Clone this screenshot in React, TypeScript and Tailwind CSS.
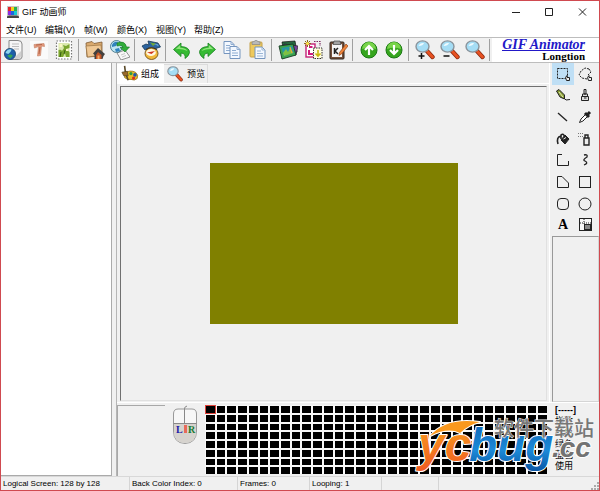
import type { ReactNode } from "react"

type Item = { label: string; icon: ReactNode }

const Svg = ({ children, className = "h-5 w-5" }: { children: ReactNode; className?: string }) => (
  <svg viewBox="0 0 20 20" className={className} fill="none" aria-hidden="true">
    {children}
  </svg>
)

const AppIcon = () => (
  <svg viewBox="0 0 12 12" className="h-3 w-3" aria-hidden="true">
    <rect width="12" height="12" fill="#c8c8c8" />
    <rect x="1" y="1" width="9" height="8" fill="#222" />
    <rect x="1" y="1" width="3" height="4" fill="#e5232b" />
    <rect x="4" y="1" width="3" height="4" fill="#f5d020" />
    <rect x="7" y="1" width="3" height="4" fill="#25b34a" />
    <rect x="1" y="5" width="3" height="4" fill="#8a2be2" />
    <rect x="4" y="5" width="3" height="4" fill="#1a66e0" />
    <rect x="7" y="5" width="3" height="4" fill="#1ac7d0" />
    <path d="M0 12V10.500L2 9.500H10L12 10.500V12Z" fill="#444" />
  </svg>
)

const Globe = ({ x, y, r }: { x: number; y: number; r: number }) => (
  <g transform={`translate(${x} ${y})`}>
    <circle r={r} fill="#1d5fa8" stroke="#123a66" strokeWidth=".7" />
    <path
      d={`M${-r * 0.8} ${-r * 0.2}Q${-r * 0.5} ${-r} ${r * 0.3} ${-r * 0.8}Q${r * 0.1} ${-r * 0.2} ${-r * 0.3} 0Z`}
      fill="#8fd6ee"
    />
    <path d={`M${-r * 0.5} ${r * 0.3}Q${r * 0.2} ${-r * 0.1} ${r * 0.5} ${r * 0.3}L${r * 0.1} ${r * 0.8}Z`} fill="#35a853" />
  </g>
)

const NewIcon = () => (
  <Svg>
    <path d="M5 .5H14Q18 .5 18 4V17Q18 19.500 14 19.500H5Z" fill="#f6f6f6" stroke="#888" />
    <path d="M8 4H15M8 6.500H15M10 9H15" stroke="#bdbdbd" />
    <path d="M12 16L17 11V16Q17 19 13 19H10Z" fill="#d0d0d0" />
    <Globe x={6} y={14} r={5.6} />
  </Svg>
)

const TextFrameIcon = () => (
  <Svg>
    <rect x="1" y="1" width="18" height="18" fill="#fafafa" />
    <path d="M5.500 8L5 4.500L15 3.500L15.500 6.500L12.500 6L11.500 15.500L8.500 16L9.500 6.500Z" fill="#e3977a" stroke="#c98a70" strokeWidth=".7" />
    <path d="M7 5L13 4.500M11 7L10 14" stroke="#a9583c" strokeWidth=".8" />
  </Svg>
)

const StampIcon = () => (
  <Svg>
    <rect x="2.500" y="1" width="15" height="18" fill="#fff" stroke="#777" strokeWidth="1.200" strokeDasharray="1.500 1.500" />
    <rect x="4.500" y="3" width="11" height="14" fill="#dbe8ae" />
    <path d="M4.500 17V10Q7 9 8 11L10 8L9 5L12 6L15.500 4V8L12 9L15.500 12V17H12L11 13L9 17Z" fill="#7ba52e" />
    <path d="M5.500 4H8V7H5.500ZM12 9H14V11H12Z" fill="#fcf7c4" />
    <path d="M7 12L6 17M11 10L10 14" stroke="#2f5512" strokeWidth=".9" />
  </Svg>
)

const FolderHomeIcon = () => (
  <Svg>
    <path d="M1 3L7 1.500L9 3.500L17 2V16L2 17Z" fill="#d9a96e" stroke="#805c35" strokeWidth=".8" />
    <path d="M1 6L16 5L17 15L2.500 17Z" fill="#efc895" stroke="#9a7242" strokeWidth=".7" />
    <path d="M8 13.500L13 8L20 14L18.500 16L17.500 19H9.500V15Z" fill="#43403e" />
    <path d="M11 15L13 12L16.500 15V19H11Z" fill="#c35526" />
    <path d="M12.500 15.500H14.500V19H12.500Z" fill="#f5ad6b" />
  </Svg>
)

const GlobePageIcon = () => (
  <Svg>
    <path d="M7 13L15 10L20 17L11 20Z" fill="#f7f7f7" stroke="#777" strokeWidth=".8" />
    <path d="M11 15L15 13.500M12 17L16 15.500" stroke="#bbb" strokeWidth=".8" />
    <circle cx="6.500" cy="6.500" r="6" fill="#bfe5f2" stroke="#2c6379" strokeWidth=".8" />
    <path d="M2 5Q4 1 8 2L6 6L2 7ZM5 9L9 8L10 11L6 12Z" fill="#2f82bd" />
    <path d="M7 3Q15 0 16.500 7H19.500L15 12L10 7.500H13Q12 4.500 7 6Z" fill="#31ad3a" stroke="#157423" strokeWidth=".6" />
  </Svg>
)

const CoverDiscIcon = () => (
  <Svg>
    <path d="M1 6L5 4L8 5L7 1L17 3L19.500 7L13 9L8 8L4 10Z" fill="#2c64a0" stroke="#193957" strokeWidth=".8" />
    <path d="M9 2.500L15 3.500L12 6Z" fill="#70a83a" />
    <path d="M13 4L17 4.500L17.500 6Z" fill="#7ec0ec" />
    <ellipse cx="10.500" cy="13.500" rx="6.500" ry="6" fill="#f1b83a" stroke="#75511b" strokeWidth=".9" />
    <ellipse cx="10" cy="12.500" rx="4.800" ry="3.600" fill="#fff8e2" />
    <path d="M6 12.500L14 11L10.500 14Z" fill="#d3351f" />
    <path d="M5 9.500Q10 6 16 9.500" stroke="#333" strokeWidth="1.100" />
  </Svg>
)

const UndoIcon = ({ flip = false }: { flip?: boolean }) => (
  <Svg className={flip ? "h-5 w-5 -scale-x-100" : "h-5 w-5"}>
    <path d="M1.500 9.500L9 3V6.500Q17.500 7 17.500 12.500Q17 16 13 18.500Q14 13.500 9 13V16.500Z" fill="#36bb33" stroke="#178020" strokeWidth=".8" strokeLinejoin="round" />
    <path d="M3.500 9.300L8.200 5V7.800Q14 8 15.500 11Q10 8.500 3.500 9.300Z" fill="#90e57b" />
  </Svg>
)

const CopyIcon = () => (
  <Svg>
    {[[2, 1.5], [8, 6.5]].map(([x, y]) => (
      <g key={x} transform={`translate(${x} ${y})`}>
        <path d="M0 0H7L10 3V12H0Z" fill="#f3f8ff" stroke="#7595be" />
        <path d="M7 0V3H10M2 4H6M2 6.500H8M2 9H8" stroke="#8eacd0" />
      </g>
    ))}
  </Svg>
)

const PasteIcon = () => (
  <Svg>
    <rect x="3" y="2" width="12" height="15" rx="1" fill="#edc95e" stroke="#c4a04a" />
    <path d="M5 4.500V2L7 1.500Q9-1 11 1.500L13 2V4.500Z" fill="#b9b9b9" stroke="#858585" strokeWidth=".7" />
    <path d="M8 7H15L18 10V18.500H8Z" fill="#f3f8ff" stroke="#7595be" />
    <path d="M15 7V10H18M10 11H14M10 13.500H16M10 16H16" stroke="#9cb6d5" />
  </Svg>
)

const PhotosIcon = () => (
  <Svg>
    <path d="M4 2L17 1L19 12L6 14Z" fill="#276740" stroke="#111" strokeWidth=".7" />
    <path d="M6 4L20 6L18 15L4 13Z" fill="#7a3f9a" stroke="#222" strokeWidth=".7" />
    <path d="M1 6L15 4L18 15L4 19Z" fill="#3ba34e" stroke="#163a22" strokeWidth=".9" />
    <path d="M3.500 8L14 6L16 13L6 16Z" fill="#2795a4" />
    <path d="M5 13L8 9L10 12L12 8L15.500 13L6 16Z" fill="#7fc043" />
    <path d="M12 7L14 13" stroke="#e4ad39" strokeWidth="1.200" />
  </Svg>
)

const SwapFramesIcon = () => (
  <Svg>
    <rect x="3" y="4" width="9" height="13" fill="#fff" stroke="#c42077" strokeWidth="1.400" />
    <path d="M6 7H9.500M6 10V14H10" stroke="#d01b7c" strokeWidth="2" />
    <rect x="10.500" y="8" width="8.500" height="10.500" fill="#fffde0" stroke="#333" strokeDasharray="1.500 1" />
    <path d="M15 10V16M12.500 13.500L15 16L17.500 13.500" stroke="#c9b80e" strokeWidth="1.600" />
    <path d="M11 1.500H17V6" stroke="#7a2a60" strokeDasharray="1.500 1" strokeWidth="1.200" />
    <path d="M1 3.500H8M4.500 0V7M2 1L7 6M7 1L2 6" stroke="#8d6914" />
    <circle cx="4.500" cy="3.500" r="1.600" fill="#ffe552" />
  </Svg>
)

const ClipboardIcon = () => (
  <Svg>
    <rect x="2" y="2" width="14" height="17" rx="1" fill="#76503a" stroke="#30261f" />
    <path d="M4 4H14V17H4Z" fill="#f5f5f5" />
    <path d="M6 1H12L13 4.500H5Z" fill="#a2a2a2" stroke="#444" strokeWidth=".7" />
    <path d="M6.500 8V14M10 8L7 11L10 14" stroke="#222" strokeWidth="1.500" />
    <path d="M18 4L20 6L13.500 14L11 15.500L11.500 12.500Z" fill="#ee843a" stroke="#934517" strokeWidth=".7" />
  </Svg>
)

const CircleArrow = ({ down = false }: { down?: boolean }) => (
  <Svg>
    <circle cx="10" cy="10" r="8" fill="#36a51e" stroke="#1b7914" />
    <path d="M3 9A7 7 0 0 1 17 9Q10 6 3 9Z" fill="#78d44a" />
    <path
      d={down ? "M10 5V14M6 10L10 14L14 10" : "M10 15V6M6 10L10 6L14 10"}
      stroke="#fff"
      strokeWidth="2.200"
    />
  </Svg>
)

const Magnifier = ({ sign, className }: { sign?: "+" | "-"; className?: string }) => (
  <Svg className={className}>
    <path d="M12 11L17.500 17" stroke="#8a2a10" strokeWidth="4.400" strokeLinecap="round" />
    <path d="M12.500 11.500L17.500 17" stroke="#e85222" strokeWidth="2.800" strokeLinecap="round" />
    <ellipse cx="7.500" cy="6.500" rx="6.500" ry="5.600" fill="#a5ddf5" stroke="#8a949c" strokeWidth="1.400" />
    <path d="M3.500 6Q5 2.500 9 3Q8 6 3.500 6Z" fill="#effbff" />
    {sign && <path d={sign === "+" ? "M3.500 16H9.500M6.500 13V19" : "M3.500 16H9.500"} stroke="#111" strokeWidth="1.500" />}
  </Svg>
)

const ComposeIcon = () => (
  <Svg className="h-[18px] w-[18px]">
    <path d="M4 9Q10 5 16 8Q20 11 18 15Q15 18 11 16Q7 17 4 14Z" fill="#e8bd26" stroke="#896819" strokeWidth=".8" />
    <circle cx="11" cy="9.500" r="1.800" fill="#2c9b42" />
    <circle cx="15.500" cy="11" r="2" fill="#1f57ad" />
    <circle cx="14" cy="14.500" r="1.800" fill="#d52e20" />
    <path d="M4 1L5 9L8 17" stroke="#5a4a2a" strokeWidth="1.800" />
    <path d="M1 8L7 7L8 12L3 12Z" fill="#9a6a2a" stroke="#453c1d" strokeWidth=".7" />
  </Svg>
)

const toolbarGroups: Item[][] = [
  [
    { label: "新建", icon: <NewIcon /> },
    { label: "文字", icon: <TextFrameIcon /> },
    { label: "图章", icon: <StampIcon /> },
  ],
  [
    { label: "打开", icon: <FolderHomeIcon /> },
    { label: "网页", icon: <GlobePageIcon /> },
  ],
  [{ label: "保存", icon: <CoverDiscIcon /> }],
  [
    { label: "撤销", icon: <UndoIcon /> },
    { label: "重做", icon: <UndoIcon flip /> },
    { label: "复制", icon: <CopyIcon /> },
    { label: "粘贴", icon: <PasteIcon /> },
  ],
  [
    { label: "图片", icon: <PhotosIcon /> },
    { label: "替换帧", icon: <SwapFramesIcon /> },
    { label: "属性", icon: <ClipboardIcon /> },
  ],
  [
    { label: "上移", icon: <CircleArrow /> },
    { label: "下移", icon: <CircleArrow down /> },
  ],
  [
    { label: "放大", icon: <Magnifier sign="+" /> },
    { label: "缩小", icon: <Magnifier sign="-" /> },
    { label: "实际大小", icon: <Magnifier /> },
  ],
]

const Tool = ({ children }: { children: ReactNode }) => (
  <svg viewBox="0 0 16 16" className="h-4 w-4" fill="none" stroke="#222" aria-hidden="true">
    {children}
  </svg>
)

const tools: Item[] = [
  {
    label: "选择",
    icon: (
      <Tool>
        <rect x="2.500" y="2.500" width="10" height="10" strokeDasharray="2 1" />
        <path d="M10.500 11.500L12 9.500V11.500L14.500 11.500V14.500H11.500Z" fill="#eee" />
      </Tool>
    ),
  },
  {
    label: "套索",
    icon: (
      <Tool>
        <path d="M12 3L8 2L4 5L2 9L5 12L10 13M12 3L14 6L11 9" strokeDasharray="2 1" />
        <path d="M10.500 11.500L12 9.500V11.500L14.500 11.500V14.500H11.500Z" fill="#eee" />
      </Tool>
    ),
  },
  {
    label: "钢笔",
    icon: (
      <Tool>
        <path d="M1.500 4L4 2.500L9.500 8V12L5 10Z" fill="#879d35" />
        <path d="M4 5L8 10" stroke="#e5eab5" />
        <path d="M9 11L11 13L15 12.500" />
      </Tool>
    ),
  },
  {
    label: "画笔",
    icon: (
      <Tool>
        <path d="M7 2.500H9V7H7ZM5.500 7H10.500V9.500H5.500ZM4.500 9.500H11.500V13.500H4.500Z" fill="#ddd" />
        <path d="M7 11H9.500" />
      </Tool>
    ),
  },
  { label: "直线", icon: <Tool><path d="M3 4L12 12" strokeWidth="1.300" /></Tool> },
  {
    label: "吸管",
    icon: (
      <Tool>
        <path d="M9 5L4 10L2.500 13.500L6 12L11 7" fill="#fff" />
        <path d="M8 4L12 8M10 6L13 3" strokeWidth="3" />
      </Tool>
    ),
  },
  {
    label: "填充",
    icon: (
      <Tool>
        <path d="M6 9L10 4L14 8L10 13Z" fill="#222" />
        <path d="M6 8V4Q8 2 9.500 5M3 13Q1 6 6 5" strokeWidth="1.600" />
        <path d="M8.500 8L11 6.500" stroke="#eee" />
      </Tool>
    ),
  },
  {
    label: "喷枪",
    icon: (
      <Tool>
        <path d="M7 7H12V14H7ZM8 4H11V7H8Z" fill="#eee" strokeWidth="1.400" />
        <path d="M1 2.500H6M1 5.500H6" stroke="#777" strokeDasharray="1 1" />
      </Tool>
    ),
  },
  { label: "折线", icon: <Tool><path d="M7 2.500H2.500V13.500H13.500V9" /></Tool> },
  { label: "曲线", icon: <Tool><path d="M7 3Q11 2 10 5Q5 8 8 9Q12 11 7 13" strokeWidth="1.300" /></Tool> },
  { label: "多边形", icon: <Tool><path d="M2.500 2.500H7L13.500 9V13.500H2.500Z" /></Tool> },
  { label: "矩形", icon: <Tool><rect x="2.500" y="2.500" width="11" height="11" /></Tool> },
  { label: "圆角矩形", icon: <Tool><rect x="2.500" y="2.500" width="11" height="11" rx="3.500" /></Tool> },
  { label: "椭圆", icon: <Tool><circle cx="8" cy="8" r="6" /></Tool> },
  { label: "文字", icon: <span className="font-['Liberation_Serif',serif] text-sm font-bold leading-4">A</span> },
  {
    label: "缩放",
    icon: (
      <Tool>
        <rect x="2.500" y="1.500" width="12" height="12" fill="#f8f8f8" />
        <rect x="7.500" y="7.500" width="6" height="5" fill="#888" />
        <path d="M7 2V7M3 6H14" strokeDasharray="1 1" />
      </Tool>
    ),
  },
]

const menus = [
  { label: "文件(U)", width: "w-[39px]" },
  { label: "编辑(V)", width: "w-[39px]" },
  { label: "帧(W)", width: "w-[33px]" },
  { label: "颜色(X)", width: "w-[39px]" },
  { label: "视图(Y)", width: "w-[38px]" },
  { label: "帮助(Z)", width: "w-[38px]" },
]

const statusItems = [
  { text: "Logical Screen: 128 by 128", width: "w-[129px]" },
  { text: "Back Color Index: 0", width: "w-[108px]" },
  { text: "Frames: 0", width: "w-[72px]" },
  { text: "Looping: 1", width: "w-[72px]" },
  { text: "", width: "w-[57px]" },
]

const paletteLabels = ["[-----]", "指数", "红色", "绿色", "蓝色", "使用"]

function TitleBar() {
  return (
    <header className="flex h-[21px] shrink-0 items-center bg-white pl-1.5">
      <AppIcon />
      <h1 className="ml-[3px] flex-1 text-[9px] leading-4">GIF 动画师</h1>
      <div className="flex">
        {[
          ["最小化", "M0 5.500H8"],
          ["最大化", "M.5 1.500H7.500V8.500H.5Z"],
          ["关闭", "M1 1.500L8 8.500M8 1.500L1 8.500"],
        ].map(([label, d]) => (
          <button key={label} aria-label={label} className="flex h-5 w-[33px] items-center justify-center">
            <svg viewBox="0 0 9 10" className="h-2.5 w-[9px]" fill="none" stroke="#222">
              <path d={d} />
            </svg>
          </button>
        ))}
      </div>
    </header>
  )
}

function Toolbar() {
  return (
    <div role="toolbar" className="flex h-[26px] shrink-0 items-center border-y border-[#bdbdbd] bg-[#f0f0f0]">
      {toolbarGroups.map((group, i) => (
        <div key={i} className="flex items-center border-r border-[#a0a0a0] pr-0.5 pl-[3px] first:pl-0">
          {group.map((item) => (
            <button key={item.label} aria-label={item.label} className="flex h-[22px] w-[25px] items-center justify-center">
              {item.icon}
            </button>
          ))}
        </div>
      ))}
      <a
        href="#animator"
        className="ml-0.5 flex h-full flex-1 flex-col items-end justify-center bg-white pr-3.5 font-['Liberation_Serif',serif] font-bold"
      >
        <span className="border-b border-[#2218c8] text-sm leading-[11px] text-[#2218c8] italic">GIF Animator</span>
        <span className="text-[11px] leading-[10px] text-black">Longtion</span>
      </a>
    </div>
  )
}

function MouseButtons() {
  return (
    <svg viewBox="0 0 26 40" className="h-10 w-[26px] shrink-0" aria-label="L R">
      <path d="M1.500 9Q1.500 4 6 4H20Q24.500 4 24.500 9V26Q24.500 38 13 38.500Q1.500 38 1.500 26Z" fill="#f7f7f7" stroke="#999" />
      <path d="M2 19H24V26Q24 38 13 38Q2 38 2 26Z" fill="#d6d3ce" />
      <path d="M12.500 19V4Q12 2 15 1M1.500 18.500H24.500" stroke="#888" fill="none" />
      <rect x="12" y="20" width="3" height="8" fill="#e86a5a" />
      <g fontFamily="Liberation Serif, serif" fontSize="10" fontWeight="bold">
        <text x="4" y="28" fill="#1d20a8">L</text>
        <text x="16" y="28" fill="#187a32">R</text>
      </g>
    </svg>
  )
}

function Watermark() {
  return (
    <svg viewBox="0 0 185 68" className="pointer-events-none absolute right-0 bottom-0 h-[68px] w-[185px]">
      <defs>
        <linearGradient id="warm" x1="0" y1="0" x2="0" y2="1">
          <stop offset="0" stopColor="#f9a51c" />
          <stop offset="1" stopColor="#ef5b22" />
        </linearGradient>
        <linearGradient id="cool" x1="0" y1="0" x2="0" y2="1">
          <stop offset="0" stopColor="#0e62b4" />
          <stop offset=".6" stopColor="#1c8ad8" />
          <stop offset="1" stopColor="#0a56a5" />
        </linearGradient>
      </defs>
      <g
        fontFamily="Liberation Sans, sans-serif"
        fontWeight="bold"
        paintOrder="stroke"
        stroke="#fff"
        strokeWidth="2"
        strokeLinejoin="round"
      >
        <path d="M16 28Q32 9 66 14Q54 17 46 25Q34 19 16 28Z" fill="#f9981d" />
        <text x="4" y="53" fontSize="48" fontStyle="italic" fill="url(#warm)">yc</text>
        <text x="55" y="53" fontSize="46" fontStyle="italic" fill="url(#cool)">bug</text>
        <text x="138" y="49" fontSize="28" fontStyle="italic" fill="#737373">.cc</text>
      </g>
      <text
        x="80"
        y="28"
        fontFamily="Noto Sans CJK SC, sans-serif"
        fontSize="20"
        fontWeight="500"
        fill="#777"
        stroke="#f5f5f5"
        strokeWidth="1"
        paintOrder="stroke"
      >
        软件下载站
      </text>
    </svg>
  )
}

function Palette() {
  return (
    <section className="relative flex h-[74px] shrink-0 border-t border-white pt-0.5">
      <div className="h-[71px] w-12 shrink-0 border-t border-l border-[#a8a8a8]" />
      <div className="flex w-10 shrink-0 justify-center">
        <MouseButtons />
      </div>
      <div className="grid h-[69px] flex-1 grid-cols-32 grid-rows-8 gap-0.5 bg-[#f8f8f8] pt-px pl-px">
        {Array.from({ length: 256 }).map((_, i) => (
          <button
            key={i}
            aria-label={`颜色 ${i}`}
            className={i === 0 ? "-m-px border border-[#e0453c] bg-black" : "bg-black"}
          />
        ))}
      </div>
      <ul className="flex h-[67px] w-[52px] shrink-0 flex-col justify-between pl-2 text-[9px] leading-[11px]">
        {paletteLabels.map((label) => (
          <li key={label} className="first:font-bold">{label}</li>
        ))}
      </ul>
      <Watermark />
    </section>
  )
}

function Workspace() {
  return (
    <div className="flex min-w-0 flex-1 flex-col border-l border-[#b5b5b5]">
      <div className="flex min-h-0 flex-1">
        <div className="flex min-w-0 flex-1 flex-col border-r border-white pt-px">
          <div role="tablist" className="flex h-[19px] shrink-0 text-[9px] leading-4">
            <button role="tab" aria-selected="true" className="flex w-[47px] items-center gap-0.5 bg-white pl-1">
              <ComposeIcon />
              <span className="whitespace-nowrap">组成</span>
            </button>
            <button role="tab" aria-selected="false" className="flex w-[44px] items-center gap-1 border-t border-r border-[#dcdcdc] pl-[3px]">
              <Magnifier className="h-4 w-4" />
              <span className="whitespace-nowrap">预览</span>
            </button>
          </div>
          <div className="flex flex-1 border-t border-white pt-0.5 pr-0.5 pb-px pl-[3px]">
            <main className="flex flex-1 items-center justify-center border border-[#e0e0e0] border-t-[#707070] border-l-[#707070]">
              <div className="h-[161px] w-[248px] bg-[#808000]" />
            </main>
          </div>
        </div>
        <aside className="ml-0.5 flex w-[47px] shrink-0 flex-col">
          <div className="grid h-[173px] grid-cols-2 grid-rows-8 pr-[3px]">
            {tools.map((tool, i) => (
              <button
                key={tool.label + i}
                aria-label={tool.label}
                className={i === 0 ? "flex items-center justify-center bg-[#bfdff5]" : "flex items-center justify-center"}
              >
                {tool.icon}
              </button>
            ))}
          </div>
          <div className="flex-1 border border-[#d5d5d5] border-t-[#999] border-l-[#999]" />
        </aside>
      </div>
      <Palette />
    </div>
  )
}

export default function App() {
  return (
    <div className="flex h-screen flex-col overflow-hidden border border-[#d04a50] bg-[#f0f0f0] font-['Liberation_Sans','Noto_Sans_CJK_SC',sans-serif] text-black">
      <TitleBar />
      <nav className="flex h-[15px] shrink-0 bg-white text-[9px] leading-[14px]">
        {menus.map((menu) => (
          <button key={menu.label} className={`${menu.width} shrink-0 pl-[5px] text-left whitespace-nowrap`}>
            {menu.label}
          </button>
        ))}
      </nav>
      <Toolbar />
      <div className="flex min-h-0 flex-1 gap-1">
        <aside className="w-[111px] shrink-0 border-r border-b border-[#aaa] bg-white" />
        <Workspace />
      </div>
      <footer className="flex h-[14px] shrink-0 border-t border-[#d8d8d8] text-[8px] leading-[13px]">
        {statusItems.map((item, i) => (
          <div key={i} className={`${item.width} shrink-0 border-r border-[#d5d5d5] pl-0.5 whitespace-nowrap`}>
            {item.text}
          </div>
        ))}
        <svg viewBox="0 0 8 8" className="mt-auto ml-auto h-2 w-2" fill="#aaa" aria-hidden="true">
          <path d="M6 0H8V2H6ZM3 3H5V5H3ZM6 3H8V5H6ZM0 6H2V8H0ZM3 6H5V8H3ZM6 6H8V8H6Z" />
        </svg>
      </footer>
    </div>
  )
}
